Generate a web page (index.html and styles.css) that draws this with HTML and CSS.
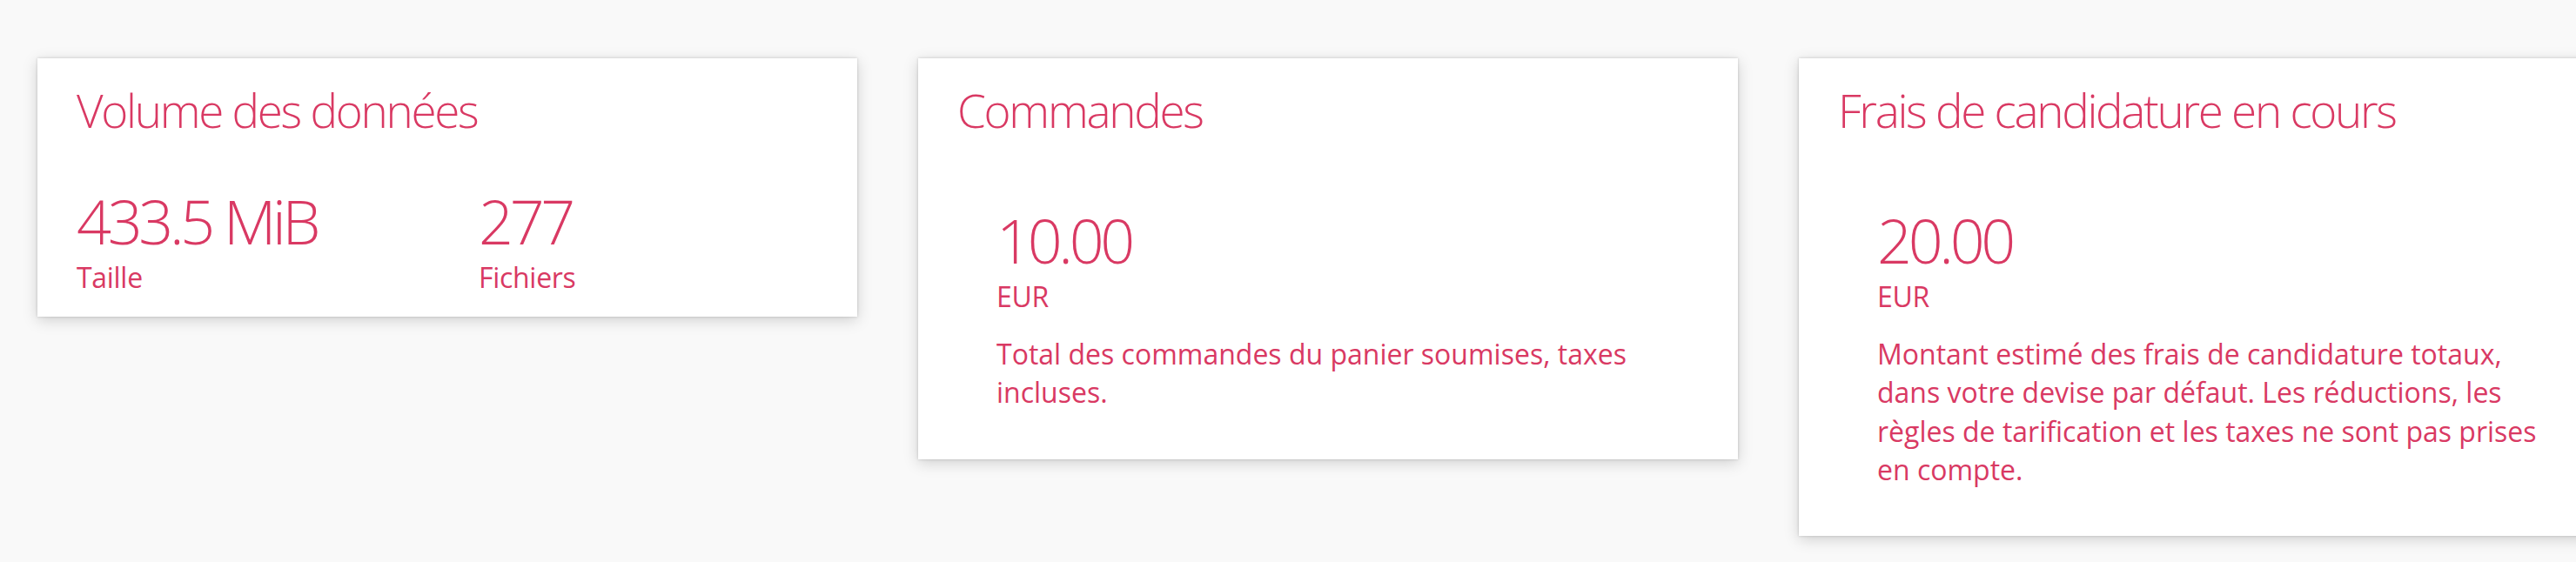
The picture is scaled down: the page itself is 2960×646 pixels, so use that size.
FILE: index.html
```html
<!DOCTYPE html>
<html lang="fr">
<head>
<meta charset="utf-8">
<title>Tableau de bord</title>
<link rel="stylesheet" href="styles.css">
</head>
<body>
<main class="cards">
  <section class="card">
    <h2 class="card-title">Volume des données</h2>
    <div class="stats">
      <div class="stat">
        <div class="stat-value">433.5 MiB</div>
        <div class="stat-label">Taille</div>
      </div>
      <div class="stat">
        <div class="stat-value">277</div>
        <div class="stat-label">Fichiers</div>
      </div>
    </div>
  </section>
  <section class="card">
    <h2 class="card-title">Commandes</h2>
    <div class="card-body">
      <div class="stat-value">10.00</div>
      <div class="stat-label">EUR</div>
      <p class="desc">Total des commandes du panier soumises, taxes incluses.</p>
    </div>
  </section>
  <section class="card">
    <h2 class="card-title">Frais de candidature en cours</h2>
    <div class="card-body">
      <div class="stat-value">20.00</div>
      <div class="stat-label">EUR</div>
      <p class="desc">Montant estimé des frais de candidature totaux, dans votre devise par défaut. Les réductions, les règles de tarification et les taxes ne sont pas prises en compte.</p>
    </div>
  </section>
</main>
</body>
</html>
```
FILE: styles.css
```css
html, body {
  margin: 0;
  padding: 0;
  background: #f9f9f9;
  overflow: hidden;
}
body {
  font-family: "Open Sans", "Noto Sans", sans-serif;
  color: #d93963;
  width: 2960px;
  height: 646px;
}
.cards {
  display: flex;
  align-items: flex-start;
  gap: 70px;
  padding: 67px 0 0 43px;
}
.card {
  flex: 0 0 942px;
  box-sizing: border-box;
  background: #ffffff;
  padding: 24px 45px 22px;
  box-shadow: 0 0 3px rgba(0, 0, 0, 0.18), 0 4px 16px rgba(0, 0, 0, 0.17);
}
.card-title {
  margin: 0;
  font-size: 53px;
  font-weight: 300;
  letter-spacing: -2.3px;
  line-height: 72px;
}
.stats {
  display: grid;
  grid-template-columns: 462px 1fr;
  margin-top: 48px;
}
.stat-value {
  font-size: 70px;
  font-weight: 300;
  letter-spacing: -4.3px;
  line-height: 86px;
}
.stat-label {
  font-size: 32px;
  font-weight: 400;
  letter-spacing: -0.3px;
  line-height: 44.8px;
}
.card-body {
  margin-top: 48px;
  padding: 22px 45px 32px;
}
.desc {
  margin: 21px 0 0;
  font-size: 32px;
  line-height: 44.4px;
}
```
